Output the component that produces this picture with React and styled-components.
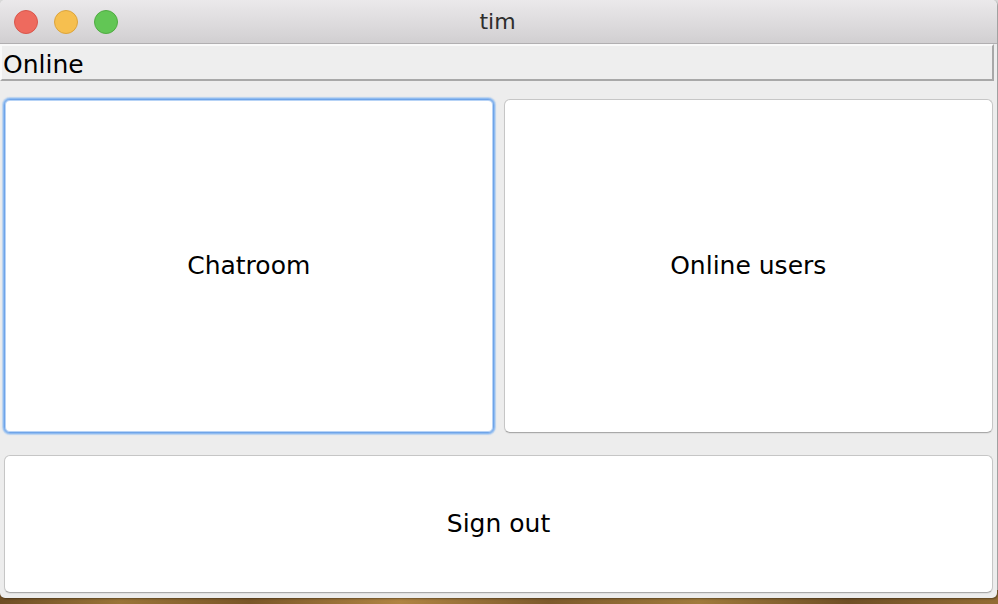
import React from "react";
import styled, { createGlobalStyle } from "styled-components";

const Global = createGlobalStyle`
  html, body { margin: 0; padding: 0; }
  body {
    width: 998px;
    height: 604px;
    overflow: hidden;
    background: linear-gradient(90deg, #6e4e25 0%, #9a7438 12%, #7a5628 25%, #b08443 40%, #7d5a2c 55%, #a07a3c 70%, #6f4f26 85%, #936c34 100%);
    font-family: "DejaVu Sans", "Noto Sans", sans-serif;
  }
`;

const Page = styled.div`
  width: 998px;
  height: 604px;
  background: linear-gradient(180deg, #d9d9d9 0px, #d9d9d9 590px, transparent 590px);
`;

const Window = styled.div`
  width: 997px;
  height: 598px;
  display: flex;
  flex-direction: column;
  background: #ededed;
  border-radius: 5px;
  overflow: hidden;
  box-shadow: 1px 1px 2px rgba(0, 0, 0, 0.35);
`;

const TitleBar = styled.div`
  height: 43px;
  flex: none;
  display: grid;
  grid-template-columns: 1fr auto 1fr;
  align-items: center;
  background: linear-gradient(180deg, #ebe9eb 0%, #dddbdd 55%, #d1cfd1 100%);
  border-bottom: 1px solid #b1afb1;
`;

const Lights = styled.div`
  display: flex;
  gap: 16px;
  padding-left: 14px;
  align-items: center;
`;

const Light = styled.span`
  width: 22px;
  height: 22px;
  border-radius: 50%;
  background: ${(p) => p.$fill};
  border: 1px solid ${(p) => p.$edge};
`;

const Title = styled.div`
  font-family: "DejaVu Sans", sans-serif;
  font-size: 22px;
  color: #2e2e2e;
  padding-bottom: 1px;
  padding-right: 2px;
`;

const StatusLabel = styled.div`
  flex: none;
  height: 28px;
  margin-right: 3px;
  box-sizing: content-box;
  border-top: 2px solid #f9f9f9;
  border-left: 2px solid #f9f9f9;
  border-bottom: 2px solid #a8a8a8;
  border-right: 2px solid #a8a8a8;
  background: #eeeeee;
  font-size: 25px;
  line-height: 28px;
  padding-left: 1px;
  padding-top: 5px;
  color: #000;
`;

const Content = styled.div`
  flex: 1;
  display: grid;
  grid-template-rows: 334px 138px;
  row-gap: 22px;
  padding: 18px 4px 5px 4px;
`;

const TopRow = styled.div`
  display: grid;
  grid-template-columns: 1fr 1fr;
  column-gap: 10px;
`;

const Button = styled.button`
  font-family: "DejaVu Sans", "Noto Sans", sans-serif;
  font-size: 25px;
  color: #000;
  background: #ffffff;
  border-radius: 6px;
  border: 1px solid ${(p) => (p.$focused ? "#6fa4e8" : "#c6c6c6")};
  border-bottom-color: ${(p) => (p.$focused ? "#6fa4e8" : "#a9a9a9")};
  box-shadow: ${(p) =>
    p.$focused
      ? "0 0 0 1px #8fbbf0, 0 0 1px 2px rgba(140, 185, 240, 0.55), inset 0 0 0 1px #b7d3f6"
      : "0 1px 1px rgba(0, 0, 0, 0.06)"};
  padding: 0 0 2px 0;
  margin: 0;
  outline: none;
  cursor: default;
`;

export default function App() {
  return (
    <>
      <Global />
      <Page>
        <Window>
          <TitleBar>
            <Lights>
              <Light $fill="#ee6a5e" $edge="#d9564b" />
              <Light $fill="#f6bf4f" $edge="#dca43c" />
              <Light $fill="#62c655" $edge="#50ab42" />
            </Lights>
            <Title>tim</Title>
            <div />
          </TitleBar>
          <StatusLabel>Online</StatusLabel>
          <Content>
            <TopRow>
              <Button $focused>Chatroom</Button>
              <Button>Online users</Button>
            </TopRow>
            <Button>Sign out</Button>
          </Content>
        </Window>
      </Page>
    </>
  );
}
